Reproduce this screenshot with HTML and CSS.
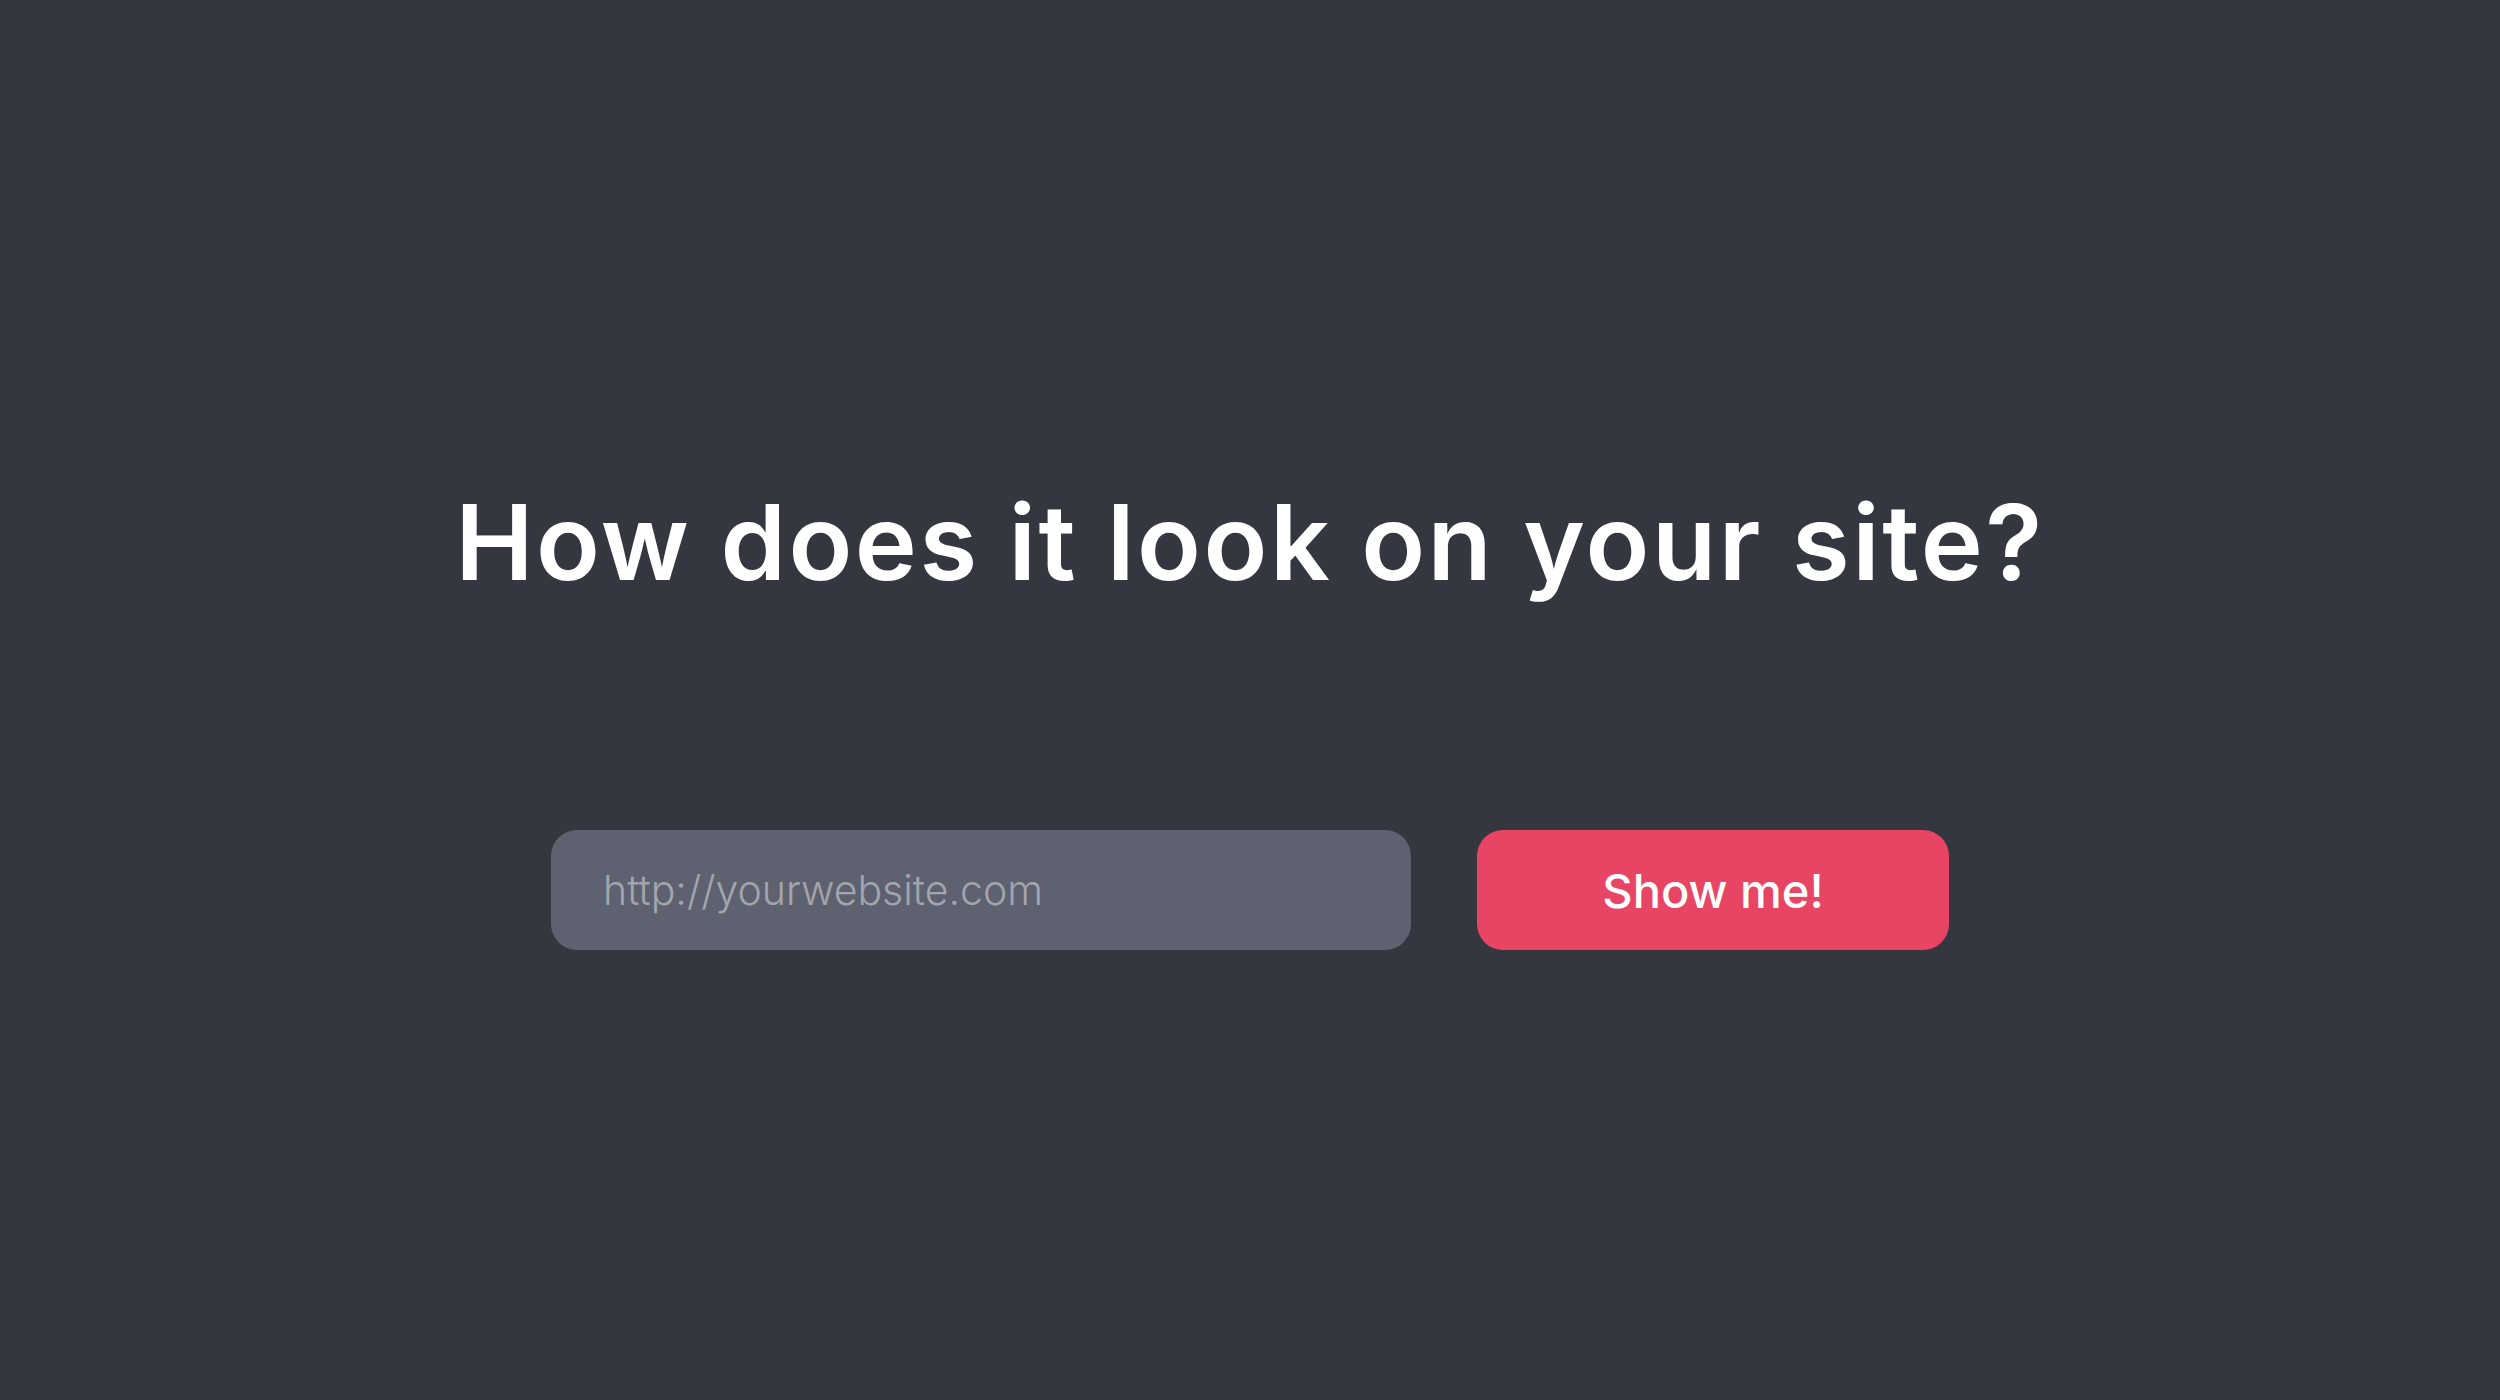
FILE: index.html
```html
<!DOCTYPE html>
<html lang="en">
<head>
<meta charset="utf-8">
<title>How does it look on your site?</title>
<link rel="stylesheet" href="styles.css">
</head>
<body>
<main class="page">
  <h1 class="title">How does it look on your site?</h1>
  <form class="preview-form" onsubmit="return false">
    <input class="url-input" type="text" placeholder="http://yourwebsite.com">
    <button class="show-btn" type="submit">Show me!</button>
  </form>
</main>
</body>
</html>
```

FILE: styles.css
```css
html, body {
  margin: 0;
  padding: 0;
  height: 100%;
}
body {
  background: #343640;
  font-family: Inter, "Noto Sans", "DejaVu Sans", sans-serif;
  color: #ffffff;
}
.page {
  display: flex;
  flex-direction: column;
  align-items: center;
  padding-top: 482px;
}
.title {
  margin: 0;
  font-size: 105px;
  line-height: 120px;
  font-weight: 600;
  letter-spacing: 2.5px;
  color: #ffffff;
}
.preview-form {
  display: flex;
  gap: 66px;
  margin-top: 228px;
}
.url-input {
  box-sizing: border-box;
  width: 860px;
  height: 120px;
  border: none;
  outline: none;
  border-radius: 26px;
  background: #5e6170;
  padding: 0 52px;
  font-family: inherit;
  font-size: 41px;
  font-weight: 300;
  color: #ffffff;
}
.url-input::placeholder {
  color: #a3a5ad;
}
.show-btn {
  box-sizing: border-box;
  width: 472px;
  height: 120px;
  border: none;
  border-radius: 26px;
  background: #e84565;
  color: #ffffff;
  font-family: inherit;
  font-size: 47px;
  font-weight: 500;
  cursor: pointer;
}
```
